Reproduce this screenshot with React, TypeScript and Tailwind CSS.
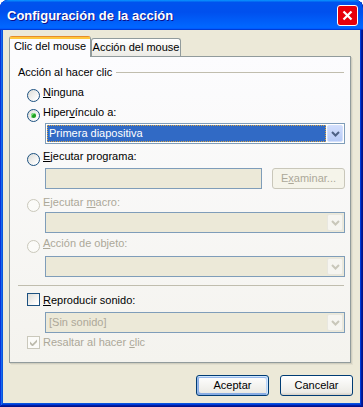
import React from 'react';

function Mn({ children }: { children: React.ReactNode }) {
  return <span className="underline underline-offset-[1px]">{children}</span>;
}

function Radio({ checked = false, disabled = false }: { checked?: boolean; disabled?: boolean }) {
  return (
    <span
      className={
        disabled
          ? 'mt-[3px] w-[13px] h-[13px] rounded-full border border-[#cac8bb] bg-[#fbfbf8] shrink-0 flex items-center justify-center'
          : 'mt-[3px] w-[13px] h-[13px] rounded-full border border-[#1c5180] bg-[linear-gradient(135deg,#dcdcd7,#ffffff_85%)] shrink-0 flex items-center justify-center'
      }
    >
      {checked && <span className="w-[5px] h-[5px] rounded-full bg-[#21a121] shadow-[inset_1px_1px_#8ee88e]" />}
    </span>
  );
}

function Check({ checked = false, disabled = false }: { checked?: boolean; disabled?: boolean }) {
  return (
    <span
      className={
        disabled
          ? 'w-[13px] h-[13px] border border-[#cac8bb] bg-[#fbfbf8] shrink-0 flex items-center justify-center'
          : 'w-[13px] h-[13px] border border-[#1c5180] bg-[linear-gradient(135deg,#dcdcd7,#ffffff_85%)] shrink-0 flex items-center justify-center'
      }
    >
      {checked && (
        <svg width="7" height="7" viewBox="0 0 7 7">
          <polygon points="0,2.5 2.5,5 7,0.5 7,3 2.5,7.5 0,5" fill={disabled ? '#bcbaac' : '#21a121'} />
        </svg>
      )}
    </span>
  );
}

function DropBtn({ disabled = false }: { disabled?: boolean }) {
  return (
    <span
      className={
        disabled
          ? 'w-[16px] shrink-0 rounded-[2px] border border-[#e8e7df] bg-[#f6f5f0] flex items-center justify-center'
          : 'w-[16px] shrink-0 rounded-[2px] border border-[#d5e0fc] bg-[linear-gradient(180deg,#d2defc,#b7cbf7)] flex items-center justify-center'
      }
    >
      <svg width="9" height="6" viewBox="0 0 9 6">
        <path d="M1 1L4.5 4.5L8 1" stroke={disabled ? '#c9c7ba' : '#4d6185'} strokeWidth="2" fill="none" />
      </svg>
    </span>
  );
}

function Combo({ text, selected = false, disabled = false }: { text?: string; selected?: boolean; disabled?: boolean }) {
  return (
    <div
      className={
        disabled
          ? 'ml-[27px] w-[300px] h-[21px] border border-[#7f9db9] bg-[#ece9d8] p-[1px] flex'
          : 'ml-[27px] w-[300px] h-[21px] border border-[#7f9db9] bg-white p-[1px] flex'
      }
    >
      {selected ? (
        <div className="flex-1 mr-[1px] bg-[#316ac5] border border-dotted border-[#d9a545] text-white leading-[15px] pl-[1px]">
          {text}
        </div>
      ) : (
        <div className="flex-1 text-[#aca899] leading-[17px] pl-[2px]">{text}</div>
      )}
      <DropBtn disabled={disabled} />
    </div>
  );
}

function XpButton({ children, isDefault = false }: { children: React.ReactNode; isDefault?: boolean }) {
  return (
    <button
      className={
        isDefault
          ? 'w-[73px] h-[21px] rounded-[3px] border border-[#003c74] bg-[linear-gradient(180deg,#ffffff,#ecebe6_86%,#d6d0c5)] shadow-[inset_-1px_1px_#cee7ff,inset_1px_2px_#98b8ea,inset_-2px_2px_#bcd4f6,inset_1px_-1px_#89ade4,inset_2px_-2px_#89ade4] text-black leading-[17px]'
          : 'w-[73px] h-[21px] rounded-[3px] border border-[#003c74] bg-[linear-gradient(180deg,#ffffff,#ecebe6_86%,#d6d0c5)] text-black leading-[17px]'
      }
    >
      {children}
    </button>
  );
}

export default function App() {
  return (
    <div className="w-[363px] h-[407px] font-['Liberation_Sans',Arial,sans-serif] text-[11px] text-black">
      <div className="w-full h-full flex flex-col rounded-t-[8px] overflow-hidden bg-[#0855dd] shadow-[inset_-1px_-1px_#00138c,inset_1px_1px_#0831d9,inset_-2px_-2px_#001ea0,inset_2px_2px_#166aee,inset_-3px_-3px_#003bda,inset_3px_3px_#0855dd]">
        {/* title bar */}
        <div className="h-[30px] shrink-0 flex items-center justify-between pl-[7px] pr-[5px] rounded-t-[8px] bg-[linear-gradient(180deg,#0997ff,#0053ee_8%,#0050ee_40%,#0066ff_88%,#0066ff_93%,#005bff_95%,#003dd7_96%,#003dd7)]">
          <div className="text-white font-bold text-[13px] leading-none [text-shadow:1px_1px_#0f1089]">
            Configuración de la acción
          </div>
          <div className="w-[21px] h-[21px] rounded-[3px] border border-white bg-red-600 flex items-center justify-center">
            <svg width="11" height="11" viewBox="0 0 11 11">
              <path d="M1.5 1.5L9.5 9.5M9.5 1.5L1.5 9.5" stroke="#ffffff" strokeWidth="2.2" />
            </svg>
          </div>
        </div>

        {/* body */}
        <div className="flex-1 mx-[3px] mb-[4px] bg-[#ece9d8] flex flex-col pt-[6px]">
          <div className="ml-[6px] w-[342px] flex flex-col">
            {/* tabs */}
            <div className="relative z-10 h-[20px] flex items-end">
              <div className="w-[82px] h-[21px] -mb-px rounded-t-[3px] border-x border-t border-[#919b9c] border-t-[#e68b2c] bg-[#fcfcfe] flex flex-col">
                <div className="h-[2px] bg-[#ffc73c]" />
                <div className="text-center leading-[13px] pt-[1px]">Clic del mouse</div>
              </div>
              <div className="w-[90px] h-[18px] rounded-t-[3px] border-x border-t border-[#919b9c] bg-[linear-gradient(180deg,#ffffff,#f3f3ef_60%,#ecebe6)] text-center leading-[13px] pt-[2px]">
                Acción del mouse
              </div>
            </div>

            {/* panel */}
            <div className="h-[307px] border border-[#919b9c] bg-[linear-gradient(180deg,#fcfcfe,#f4f3ee)] shadow-[1px_1px_0_#d0cebf,2px_2px_0_#e2dfcf] pl-[8px] pt-[9px] flex flex-col">
              <div className="w-[326px] h-[13px] flex items-center">
                <span className="leading-[13px]">Acción al hacer clic</span>
                <span className="flex-1 h-px ml-[4px] bg-[#c0bdae]" />
              </div>

              <div className="mt-[7px] ml-[9px] h-[16px] flex items-start gap-[3px]">
                <Radio />
                <span className="leading-[13px]"><Mn>N</Mn>inguna</span>
              </div>
              <div className="mt-[4px] ml-[9px] h-[16px] flex items-start gap-[3px]">
                <Radio checked />
                <span className="leading-[13px]">Hiper<Mn>v</Mn>ínculo a:</span>
              </div>
              <div className="mt-[1px]">
                <Combo text="Primera diapositiva" selected />
              </div>

              <div className="mt-[6px] ml-[9px] h-[16px] flex items-start gap-[3px]">
                <Radio />
                <span className="leading-[13px]"><Mn>E</Mn>jecutar programa:</span>
              </div>
              <div className="mt-[2px] ml-[27px] w-[300px] h-[21px] flex gap-[10px]">
                <div className="flex-1 border border-[#7f9db9] bg-[#ece9d8]" />
                <div className="w-[73px] rounded-[3px] border border-[#c9c7ba] bg-[#f5f4ea] text-[#aca899] text-center leading-[19px]">
                  E<Mn>x</Mn>aminar...
                </div>
              </div>

              <div className="mt-[7px] ml-[9px] h-[16px] flex items-start gap-[3px] text-[#aca899]">
                <Radio disabled />
                <span className="leading-[13px]">Ejecutar <Mn>m</Mn>acro:</span>
              </div>
              <div>
                <Combo disabled />
              </div>

              <div className="mt-[4px] ml-[9px] h-[16px] flex items-start gap-[3px] text-[#aca899]">
                <Radio disabled />
                <span className="leading-[13px]"><Mn>A</Mn>cción de objeto:</span>
              </div>
              <div className="mt-[3px]">
                <Combo disabled />
              </div>

              <div className="mt-[8px] w-[326px] h-px bg-[#c0bdae]" />

              <div className="mt-[7px] ml-[9px] h-[14px] flex items-start gap-[3px]">
                <Check />
                <span className="mt-[1px] leading-[13px]"><Mn>R</Mn>eproducir sonido:</span>
              </div>
              <div className="mt-[5px]">
                <Combo text="[Sin sonido]" disabled />
              </div>

              <div className="mt-[3px] ml-[9px] h-[14px] flex items-start gap-[3px] text-[#aca899]">
                <Check checked disabled />
                <span className="leading-[13px]">Resaltar al hacer <Mn>c</Mn>lic</span>
              </div>
            </div>
          </div>

          {/* buttons */}
          <div className="mt-[12px] pr-[7px] flex justify-end gap-[11px]">
            <XpButton isDefault>Aceptar</XpButton>
            <XpButton>Cancelar</XpButton>
          </div>
        </div>
      </div>
    </div>
  );
}
